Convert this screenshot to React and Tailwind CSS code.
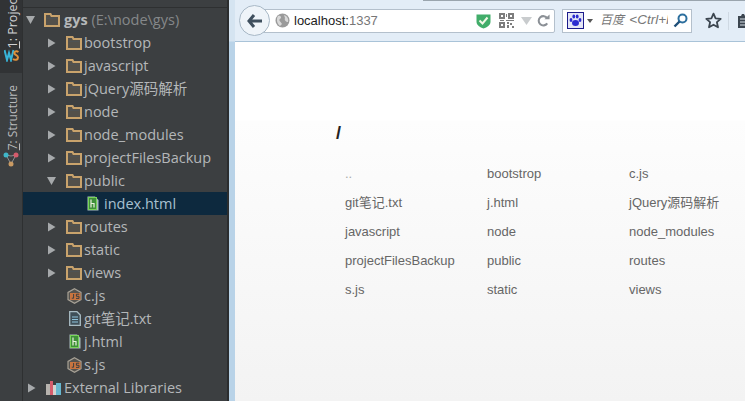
const treeFont = { fontFamily: '"Open Sans","Noto Sans CJK SC",sans-serif' };

function Arrow({ open }) {
  return (
    <svg width="9" height="10" viewBox="0 0 9 10" className="shrink-0">
      {open ? <path d="M0 1H9L4.5 9Z" fill="#a6a9ab" /> : <path d="M1 0.5L8.5 5L1 9.5Z" fill="#a6a9ab" />}
    </svg>
  );
}

function Folder() {
  return (
    <svg width="16" height="14" viewBox="0 0 16 14" className="shrink-0">
      <path d="M1 1H6.5L7.5 3H15V13H1Z" fill="#53504a" stroke="#c9a36c" strokeWidth="2" />
      <path d="M3 5.5H13" stroke="#4e5254" strokeWidth="1" />
    </svg>
  );
}

function HtmlIcon() {
  return (
    <svg width="12" height="15" viewBox="0 0 12 15" className="shrink-0">
      <path d="M0.5 0.5H8L11.5 4V14.5H0.5Z" fill="#a9bcc0" />
      <rect x="1.5" y="1.5" width="8" height="12" fill="#3f8f3a" stroke="#79d35a" strokeWidth="1" />
      <path d="M4 3.5V11.5M4 7.5H7V11.5" stroke="#e8f2dc" strokeWidth="1.2" fill="none" />
    </svg>
  );
}

function JsIcon() {
  return (
    <svg width="15" height="16" viewBox="0 0 15 16" className="shrink-0">
      <path d="M7.5 0.8L14 4.4V11.6L7.5 15.2L1 11.6V4.4Z" fill="#55534f" stroke="#a8a296" strokeWidth="1.2" />
      <rect x="3" y="5" width="10.5" height="7" fill="#c8743f" />
      <path d="M6.6 6V10.2H4.8M12.2 6.2H9.4V8.3H12V10.4H9" stroke="#3c3f41" strokeWidth="1" fill="none" />
    </svg>
  );
}

function TextIcon() {
  return (
    <svg width="12" height="15" viewBox="0 0 12 15" className="shrink-0">
      <path d="M0.7 0.7H8L11.3 4V14.3H0.7Z" fill="#3f4f58" stroke="#a9bcc4" strokeWidth="1.3" />
      <path d="M3 6H9M3 8.5H9M3 11H9" stroke="#8fc3dc" strokeWidth="1.2" />
    </svg>
  );
}

function LibIcon() {
  return (
    <svg width="15" height="14" viewBox="0 0 15 14" className="shrink-0">
      <rect x="0" y="3" width="4" height="11" fill="#b7b3ae" />
      <rect x="4" y="0" width="3" height="14" fill="#d65d6d" />
      <rect x="7" y="4" width="3" height="10" fill="#d5d3cf" />
      <rect x="10" y="2" width="5" height="12" fill="#68b7cf" />
    </svg>
  );
}

const labelClass = "whitespace-nowrap text-[14.5px] text-[#b4b7b9]";

const folderRow = (label, arrow = "closed") => (
  <div key={label} className="flex h-[23px] items-center pl-[24px]">
    <span className="mr-[10px] flex w-[9px]"><Arrow open={arrow === "open"} /></span>
    <Folder />
    <span className={`ml-[2px] ${labelClass}`} style={treeFont}>{label}</span>
  </div>
);

const fileRow = (label, icon) => (
  <div key={label} className="flex h-[23px] items-center pl-[43px]">
    <span className="flex w-[17px] justify-center">{icon}</span>
    <span className={`ml-[1px] ${labelClass}`} style={treeFont}>{label}</span>
  </div>
);

function ToolStrip() {
  return (
    <div className="flex w-[23px] shrink-0 flex-col items-center overflow-hidden border-r border-r-[#2e3031] bg-[#3c3f41]">
      <div className="flex h-[73px] w-full shrink-0 flex-col items-center justify-end overflow-hidden bg-[#313335] pb-[11px]">
        <span className="translate-x-[2px] rotate-180 whitespace-nowrap text-[12.5px] leading-[18px] text-[#d0d2d4] [writing-mode:vertical-rl]" style={treeFont}>
          <u>1</u>: Project
        </span>
        <svg width="15" height="14" viewBox="0 0 15 14" className="shrink-0">
          <path d="M0.5 2L3 12L5 5L7 12L9.5 2" stroke="#38b4d8" strokeWidth="2" fill="none" />
          <path d="M14.5 4C12.5 2.5 10 3.5 10.5 5.5C11 7.5 14 7 14 9.5C14 12 11 12.5 9 11" stroke="#e0913c" strokeWidth="2" fill="none" />
        </svg>
      </div>
      <span className="mt-[12px] translate-x-[2px] rotate-180 whitespace-nowrap text-[12px] leading-[18px] text-[#b8babc] [writing-mode:vertical-rl]" style={treeFont}>
        <u>7</u>: Structure
      </span>
      <svg width="16" height="16" viewBox="0 0 16 16" className="mt-[1px] shrink-0">
        <path d="M3 4L8 5L13 4M3 4L8 13M13 4L8 13" stroke="#8d8f90" strokeWidth="1" fill="none" />
        <circle cx="3" cy="4" r="2.5" fill="#3fb6c8" />
        <circle cx="13" cy="4" r="2.5" fill="#d45b6b" />
        <circle cx="8" cy="13" r="2.5" fill="#c99a63" />
      </svg>
    </div>
  );
}

function Tree() {
  return (
    <div className="flex w-[204px] shrink-0 flex-col overflow-hidden bg-[#3c3f41]">
      <div className="h-[8px] shrink-0 border-b border-b-[#2e3031]" />
      <div className="flex h-[23px] items-center pl-[3px]">
        <span className="mr-[9px] flex w-[9px]"><Arrow open /></span>
        <Folder />
        <span className={`ml-[4px] ${labelClass}`} style={treeFont}>
          <b className="font-bold">gys</b> <span className="text-[#85888a]">(E:\node\gys)</span>
        </span>
      </div>
      {["bootstrop", "javascript", "jQuery源码解析", "node", "node_modules", "projectFilesBackup"].map((n) => folderRow(n))}
      {folderRow("public", "open")}
      <div className="flex h-[23px] items-center bg-[#0d293e] pl-[64px]">
        <HtmlIcon />
        <span className="ml-[5px] text-[14.5px] text-[#a8c0d0]" style={treeFont}>index.html</span>
      </div>
      {["routes", "static", "views"].map((n) => folderRow(n))}
      {fileRow("c.js", <JsIcon />)}
      {fileRow("git笔记.txt", <TextIcon />)}
      {fileRow("j.html", <HtmlIcon />)}
      {fileRow("s.js", <JsIcon />)}
      <div className="flex h-[23px] items-center pl-[4px]">
        <span className="mr-[10px] flex w-[9px]"><Arrow /></span>
        <LibIcon />
        <span className={`ml-[3px] ${labelClass}`} style={treeFont}>External Libraries</span>
      </div>
    </div>
  );
}

function Toolbar() {
  return (
    <div className="relative flex h-[42px] shrink-0 items-center overflow-hidden border-b border-b-[#a9c3d8] bg-[#e3edf7] pl-[10px]" style={{ fontFamily: '"Liberation Sans","Noto Sans CJK SC",sans-serif' }}>
      <div className="absolute right-0 top-0 h-px w-[322px] bg-[#9aa5ae]" />
      <div className="flex h-[24px] w-[310px] shrink-0 items-center rounded-r-[2px] border border-[#b4c0cc] bg-white pl-[29px]">
        <svg width="15" height="15" viewBox="0 0 15 15" className="shrink-0">
          <circle cx="7.5" cy="7.5" r="7" fill="#9a9a9a" />
          <path d="M3 3C6 2 7 5 5 6C3 7 6 9 7 11L5 13C2 11 1 6 3 3ZM9 2C12 3 14 6 13 9C11 9 9 7 10 5Z" fill="#d8d8d8" />
        </svg>
        <span className="ml-[4px] text-[13px] text-[#222]">localhost:<span className="text-[#777]">1337</span></span>
        <svg width="15" height="16" viewBox="0 0 15 16" className="ml-auto shrink-0">
          <path d="M0.5 1.5H14.5V9C14.5 12 11 14.5 7.5 15.5C4 14.5 0.5 12 0.5 9Z" fill="#41ad6a" />
          <path d="M3.5 7.5L6.5 10.5L11.5 4.5" stroke="#f2f8e6" strokeWidth="2" fill="none" />
        </svg>
        <svg width="15" height="15" viewBox="0 0 15 15" className="ml-[8px] shrink-0">
          <path d="M0 0H6V6H0ZM9 0H15V6H9ZM0 9H6V15H0ZM2 2V4H4V2ZM11 2V4H13V2ZM2 11V13H4V11ZM7 1H8V4H7ZM7 7H15V8H7ZM8 9H10V11H8ZM11 10H13V12H11ZM13 13H15V15H13ZM8 12H10V15H8ZM1 7H5V8H1Z" fill="#7d7d7d" fillRule="evenodd" />
        </svg>
        <svg width="11" height="8" viewBox="0 0 11 8" className="ml-[7px] shrink-0"><path d="M0 0H11L5.5 8Z" fill="#c9ccce" /></svg>
        <svg width="13" height="14" viewBox="0 0 14 14" className="ml-[5px] mr-[4px] shrink-0">
          <path d="M11 9.5A5 5 0 1 1 11 4" stroke="#8b9096" strokeWidth="2.2" fill="none" />
          <path d="M8 5H13.5V0Z" fill="#8b9096" />
        </svg>
      </div>
      <div className="ml-[7px] flex h-[24px] w-[130px] shrink-0 items-center border border-[#b4c0cc] bg-white pl-[4px]">
        <div className="flex h-[17px] w-[17px] shrink-0 items-center justify-center border border-[#1c1c8c] bg-[#e4e6f6]">
          <svg width="13" height="13" viewBox="0 0 13 13">
            <ellipse cx="6.5" cy="9" rx="3.5" ry="3" fill="#2b2bd0" />
            <ellipse cx="2" cy="6" rx="1.4" ry="2" fill="#2b2bd0" />
            <ellipse cx="11" cy="6" rx="1.4" ry="2" fill="#2b2bd0" />
            <ellipse cx="4.8" cy="2.5" rx="1.4" ry="2" fill="#2b2bd0" />
            <ellipse cx="8.2" cy="2.5" rx="1.4" ry="2" fill="#2b2bd0" />
          </svg>
        </div>
        <svg width="6" height="4" viewBox="0 0 6 4" className="ml-[3px] shrink-0"><path d="M0 0H6L3 4Z" fill="#555" /></svg>
        <span className="ml-[7px] w-[68px] shrink-0 overflow-hidden whitespace-nowrap text-[12px] italic text-[#777]">
          百度 <span className="ml-[2px] text-[13.5px]">&lt;Ctrl+K&gt;</span>
        </span>
        <svg width="15" height="15" viewBox="0 0 15 15" className="ml-[5px] shrink-0">
          <circle cx="9.5" cy="5.5" r="4" stroke="#2c6f9e" strokeWidth="2" fill="none" />
          <path d="M6.5 8.5L1.5 13.5" stroke="#1f4f78" strokeWidth="2.4" />
        </svg>
      </div>
      <svg width="17" height="17" viewBox="0 0 17 17" className="ml-[13px] shrink-0">
        <path d="M8.5 1.6L10.6 6.3L15.7 6.8L11.9 10.2L13 15.3L8.5 12.7L4 15.3L5.1 10.2L1.3 6.8L6.4 6.3Z" fill="none" stroke="#3c4650" strokeWidth="1.8" strokeLinejoin="round" />
      </svg>
      <div className="ml-[6px] h-[18px] w-px shrink-0 bg-[#cfd9e3]" />
      <svg width="10" height="16" viewBox="0 0 10 16" className="ml-[8px] shrink-0">
        <path d="M1 3H4L5 1H7L8 3H10V15H1Z" fill="#3c4650" />
        <path d="M3 6H10M3 9H10M3 12H10" stroke="#d7e0e8" strokeWidth="1" />
      </svg>
      <div className="absolute left-[4px] top-[5px] flex h-[31px] w-[31px] items-center justify-center rounded-full border border-[#a8b8c6] bg-[#eff4f9]">
        <svg width="16" height="14" viewBox="0 0 16 14">
          <path d="M7 1L2 7L7 13M2 7H15" stroke="#3f4f5e" strokeWidth="3" fill="none" />
        </svg>
      </div>
    </div>
  );
}

const files = [
  "..", "bootstrop", "c.js",
  "git笔记.txt", "j.html", "jQuery源码解析",
  "javascript", "node", "node_modules",
  "projectFilesBackup", "public", "routes",
  "s.js", "static", "views",
];

function Page() {
  return (
    <div className="min-h-0 flex-1 bg-[linear-gradient(to_bottom,#ffffff_0,#ffffff_78px,#fdfdfd_79px,#f3f3f3_100%)] pl-[101px] pt-[81px]" style={{ fontFamily: '"Liberation Sans","Noto Sans CJK SC",sans-serif' }}>
      <h1 className="text-[18px] font-bold leading-[20px] text-[#222]">/</h1>
      <div className="mt-[16px] grid w-[435px] grid-cols-3 pl-[9px]">
        {files.map((f) => (
          <div key={f} className={`h-[29px] whitespace-nowrap text-[13px] leading-[29px] ${f === ".." ? "text-[#aaa]" : "text-[#666]"}`}>{f}</div>
        ))}
      </div>
    </div>
  );
}

export default function App() {
  return (
    <div className="flex h-[401px] w-[745px] overflow-hidden bg-white">
      <ToolStrip />
      <Tree />
      <div className="w-[2px] shrink-0 bg-[#2b2d2e]" />
      <div className="w-[6px] shrink-0 bg-[linear-gradient(to_bottom,#d5e4f1_0,#d5e4f1_41px,#b9d3e8_42px)]" />
      <div className="flex min-w-0 flex-1 flex-col">
        <Toolbar />
        <Page />
      </div>
    </div>
  );
}
